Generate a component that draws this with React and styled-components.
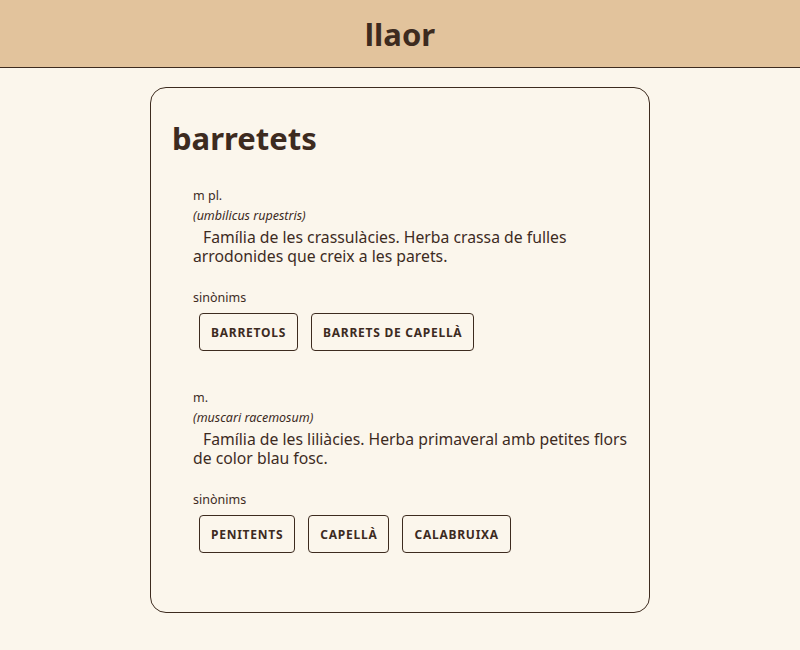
import React from "react";
import styled, { createGlobalStyle } from "styled-components";

const GlobalStyle = createGlobalStyle`
  body {
    margin: 0;
    background: #fbf6ec;
    color: #3d2b1f;
    font-family: "Noto Sans", "Open Sans", sans-serif;
  }
`;

const Header = styled.header`
  height: 67px;
  display: flex;
  align-items: center;
  justify-content: center;
  background: #e2c39c;
  border-bottom: 1px solid #3d2b1f;
`;

const Brand = styled.h1`
  margin: 0;
  font-size: 31px;
  font-weight: 700;
  line-height: 40px;
`;

const Main = styled.main`
  display: flex;
  justify-content: center;
  padding: 19px 0 36px;
`;

const Card = styled.article`
  width: 500px;
  box-sizing: border-box;
  border: 1px solid #3d2b1f;
  border-radius: 16px;
  padding: 30px 20px 59px 21px;
`;

const Word = styled.h2`
  margin: 0 0 28px;
  font-size: 31px;
  font-weight: 700;
  line-height: 40px;
`;

const Entry = styled.section`
  padding-left: 21px;
  & + & {
    margin-top: 37px;
  }
`;

const Small = styled.div`
  font-size: 12.5px;
  line-height: 20px;
  font-style: ${(p) => (p.$italic ? "italic" : "normal")};
`;

const Definition = styled.p`
  margin: 2px 0 22px;
  font-size: 15.75px;
  line-height: 19px;
  text-indent: 10px;
`;

const Synonyms = styled.ul`
  list-style: none;
  margin: 5px 0 0;
  padding: 0 0 0 6px;
  display: flex;
  gap: 13px;
`;

const Synonym = styled.li`
  height: 38px;
  box-sizing: border-box;
  display: flex;
  align-items: center;
  padding: 0 11px;
  border: 1px solid #3d2b1f;
  border-radius: 4px;
  font-size: 12px;
  font-weight: 700;
  text-transform: uppercase;
  letter-spacing: 0.75px;
`;

const entries = [
  {
    gram: "m pl.",
    latin: "(umbilicus rupestris)",
    def: "Família de les crassulàcies. Herba crassa de fulles arrodonides que creix a les parets.",
    syn: ["barretols", "barrets de capellà"],
  },
  {
    gram: "m.",
    latin: "(muscari racemosum)",
    def: "Família de les liliàcies. Herba primaveral amb petites flors de color blau fosc.",
    syn: ["penitents", "capellà", "calabruixa"],
  },
];

export default function App() {
  return (
    <>
      <GlobalStyle />
      <Header>
        <Brand>llaor</Brand>
      </Header>
      <Main>
        <Card>
          <Word>barretets</Word>
          {entries.map((e) => (
            <Entry key={e.latin}>
              <Small>{e.gram}</Small>
              <Small $italic>{e.latin}</Small>
              <Definition>{e.def}</Definition>
              <Small>sinònims</Small>
              <Synonyms>
                {e.syn.map((s) => (
                  <Synonym key={s}>{s}</Synonym>
                ))}
              </Synonyms>
            </Entry>
          ))}
        </Card>
      </Main>
    </>
  );
}
